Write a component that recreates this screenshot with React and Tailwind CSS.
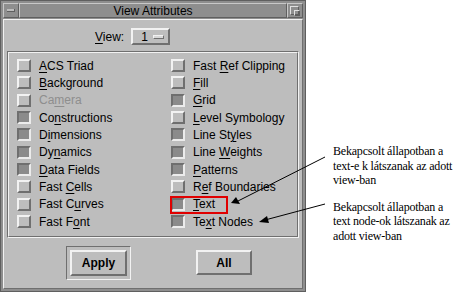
import React from "react";

const LEFT = [
  { label: "ACS Triad", key: 0, on: false },
  { label: "Background", key: 0, on: false },
  { label: "Camera", key: 2, on: false, disabled: true },
  { label: "Constructions", key: 2, on: true },
  { label: "Dimensions", key: 1, on: true },
  { label: "Dynamics", key: 2, on: true },
  { label: "Data Fields", key: 0, on: true },
  { label: "Fast Cells", key: 5, on: false },
  { label: "Fast Curves", key: 6, on: false },
  { label: "Fast Font", key: 6, on: false },
];

const RIGHT = [
  { label: "Fast Ref Clipping", key: 5, on: false },
  { label: "Fill", key: 0, on: false },
  { label: "Grid", key: 0, on: true },
  { label: "Level Symbology", key: 0, on: false },
  { label: "Line Styles", key: 7, on: true },
  { label: "Line Weights", key: 5, on: true },
  { label: "Patterns", key: 0, on: true },
  { label: "Ref Boundaries", key: 1, on: false },
  { label: "Text", key: 0, on: true },
  { label: "Text Nodes", key: 2, on: true },
];

const ui = { fontFamily: '"Liberation Sans", Arial, sans-serif' };
const serif = { fontFamily: '"Liberation Serif", "Times New Roman", serif' };

// label with one underlined mnemonic letter
const Mnemonic = ({ text, at }) => (
  <span>
    {text.slice(0, at)}
    <span className="underline underline-offset-2">{text[at]}</span>
    {text.slice(at + 1)}
  </span>
);

const Check = ({ item }) => (
  <div className="h-[17.33px] flex items-center gap-[8px]">
    {item.on ? (
      <div className="w-[14px] h-[13px] bg-[#8b8b8b] border-2 border-t-[#6f6f6f] border-l-[#6f6f6f] border-b-[#ececec] border-r-[#ececec]" />
    ) : (
      <div className="w-[14px] h-[13px] bg-[#bdbdbd] border-2 border-t-[#f2f2f2] border-l-[#f2f2f2] border-b-[#6f6f6f] border-r-[#6f6f6f]" />
    )}
    <span
      className={`text-[12px] leading-none ${
        item.disabled ? "text-[#8e8e8e]" : "text-black"
      }`}
    >
      <Mnemonic text={item.label} at={item.key} />
    </span>
  </div>
);

const bevel =
  "border-2 border-t-[#f2f2f2] border-l-[#f2f2f2] border-b-[#6f6f6f] border-r-[#6f6f6f]";

export default function App() {
  return (
    <div className="relative w-[460px] h-[292px] bg-white flex" style={ui}>
      {/* window */}
      <div className="w-[306px] h-[292px] bg-[#8e8e8e] border border-[#5f5f5f] p-[2px] flex flex-col">
        {/* title bar */}
        <div className="h-[15px] flex">
          <div className="w-[16px] bg-[#8e8e8e] border border-t-[#c8c8c8] border-l-[#c8c8c8] border-b-[#5f5f5f] border-r-[#5f5f5f] flex items-center justify-center">
            <div className="w-[8px] h-[3px] bg-[#bdbdbd] border-b border-r border-[#5f5f5f]" />
          </div>
          <div className="flex-1 bg-[#8e8e8e] border border-t-[#c8c8c8] border-l-[#c8c8c8] border-b-[#5f5f5f] border-r-[#5f5f5f] flex items-center justify-center text-[12px] text-black leading-none">
            View Attributes
          </div>
          <div className="w-[16px] bg-[#8e8e8e] border border-t-[#c8c8c8] border-l-[#c8c8c8] border-b-[#5f5f5f] border-r-[#5f5f5f] flex items-center justify-center">
            <div className="relative w-[10px] h-[10px]">
              <div className="absolute left-0 top-0 w-[9px] h-[9px] border border-t-[#e0e0e0] border-l-[#e0e0e0] border-b-[#5f5f5f] border-r-[#5f5f5f]" />
              <div className="absolute left-[4px] top-[4px] w-[6px] h-[6px] border border-t-[#e0e0e0] border-l-[#e0e0e0] border-b-[#5f5f5f] border-r-[#5f5f5f]" />
            </div>
          </div>
        </div>

        {/* body */}
        <div className="mt-[1px] flex-1 bg-[#bdbdbd] border border-t-[#f2f2f2] border-l-[#f2f2f2] border-b-[#6f6f6f] border-r-[#6f6f6f] flex flex-col px-[3px]">
          <div className="h-[31px] flex items-center pl-[88px] gap-[7px] pt-[2px]">
            <span className="text-[12px] text-black">
              <Mnemonic text="View:" at={0} />
            </span>
            <div className={`w-[39px] h-[17px] bg-[#bdbdbd] ${bevel} flex items-center justify-between pl-[8px] pr-[4px] text-[12px]`}>
              <span>1</span>
              <div className="w-[11px] h-[4px] bg-[#d8d8d8] border border-t-[#f2f2f2] border-l-[#f2f2f2] border-b-[#6f6f6f] border-r-[#6f6f6f]" />
            </div>
          </div>

          {/* group box */}
          <div className="h-[187px] border border-[#6f6f6f] border-b-[#f2f2f2] border-r-[#f2f2f2]">
            <div className="h-full border border-[#f2f2f2] border-b-[#6f6f6f] border-r-[#6f6f6f] pt-[4px] pl-[8px] grid grid-cols-[154px_1fr]">
              <div className="flex flex-col">
                {LEFT.map((it) => (
                  <Check key={it.label} item={it} />
                ))}
              </div>
              <div className="flex flex-col">
                {RIGHT.map((it) => (
                  <Check key={it.label} item={it} />
                ))}
              </div>
            </div>
          </div>

          {/* buttons */}
          <div className="flex items-start pt-[8px]">
            <div className="ml-[59px] w-[65px] h-[34px] border border-[#6f6f6f] border-b-[#f2f2f2] border-r-[#f2f2f2] p-[3px]">
              <div className={`h-full bg-[#bdbdbd] ${bevel} flex items-center justify-center text-[12px] font-bold`}>
                Apply
              </div>
            </div>
            <div className={`ml-[65px] mt-[4px] w-[56px] h-[25px] bg-[#bdbdbd] ${bevel} flex items-center justify-center text-[12px] font-bold`}>
              All
            </div>
          </div>
        </div>
      </div>

      {/* annotations */}
      <div className="flex flex-col pl-[27px] pt-[144px] gap-[12px] text-[12px] leading-[14.5px] tracking-[-0.2px] whitespace-nowrap text-black" style={serif}>
        <p>
          Bekapcsolt állapotban a<br />
          text-e k látszanak az adott<br />
          view-ban
        </p>
        <p>
          Bekapcsolt állapotban a<br />
          text node-ok látszanak az<br />
          adott view-ban
        </p>
      </div>

      {/* red highlight on Text */}
      <div className="absolute left-[170px] top-[196px] w-[58px] h-[18px] border-2 border-[#e00000]" />

      <svg className="absolute inset-0 pointer-events-none" width="460" height="292">
        <line x1="325" y1="157" x2="238" y2="201" stroke="black" strokeWidth="1" />
        <polygon points="240,204 231,203 236,197" fill="black" />
        <line x1="325" y1="204" x2="265" y2="220" stroke="black" strokeWidth="1" />
        <polygon points="259,222 267,216 269,223" fill="black" />
      </svg>
    </div>
  );
}
